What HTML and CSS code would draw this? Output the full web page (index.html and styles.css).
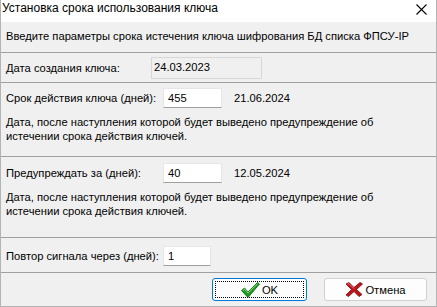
FILE: index.html
```html
<!DOCTYPE html>
<html lang="ru">
<head>
    <meta charset="UTF-8">
    <title>Установка срока использования ключа</title>
    <link rel="stylesheet" href="styles.css">
</head>
<body>
    <div class="window">
        <div class="titlebar">
            <span class="title">Установка срока использования ключа</span>
            <svg class="close" width="11" height="11" viewBox="0 0 11 11">
                <path d="M0.5 0.5 L10.5 10.5 M10.5 0.5 L0.5 10.5" stroke="#000" stroke-width="1.1"/>
            </svg>
        </div>
        <div class="panel intro">Введите параметры срока истечения ключа шифрования БД списка ФПСУ-IP</div>
        <div class="panel created">
            <span class="label">Дата создания ключа:</span>
            <span class="field disabled">24.03.2023</span>
        </div>
        <div class="panel term">
            <div class="row">
                <span class="label">Срок действия ключа (дней):</span>
                <span class="field edit">455</span>
                <span class="date">21.06.2024</span>
            </div>
            <p class="note">Дата, после наступления которой будет выведено предупреждение об<br>истечении срока действия ключей.</p>
        </div>
        <div class="panel warn">
            <div class="row">
                <span class="label">Предупреждать за (дней):</span>
                <span class="field edit">40</span>
                <span class="date">12.05.2024</span>
            </div>
            <p class="note">Дата, после наступления которой будет выведено предупреждение об<br>истечении срока действия ключей.</p>
        </div>
        <div class="panel repeat">
            <div class="row">
                <span class="label">Повтор сигнала через (дней):</span>
                <span class="field edit short">1</span>
            </div>
        </div>
        <div class="panel buttons">
            <button class="btn ok">
                <span class="focus">
                    <svg width="19" height="16" viewBox="0 0 19 16">
                        <path d="M0.5 8.5 L3.5 6 L7 10 L16.5 0.5 L18.5 2 L7 15.5 Z" fill="#1d9a1d" stroke="#0b5e0b" stroke-width="0.8"/>
                        <path d="M2 8.3 L3.6 7.2 L7 11 L16.5 1.8" fill="none" stroke="#7fe07f" stroke-width="1"/>
                    </svg>
                    OK
                </span>
            </button>
            <button class="btn cancel">
                <svg width="18" height="15" viewBox="0 0 18 15">
                    <path d="M1 2 L4 0.5 L9 5.5 L15 0.5 L17.5 2 L11.5 7.5 L17 12.5 L14 14.5 L9 9.5 L3.5 14.5 L1 13 L6.5 7.5 Z" fill="#c0141a" stroke="#6e0a0d" stroke-width="0.8"/>
                    <path d="M2.5 2.2 L4 1.6 L9 6.6" fill="none" stroke="#ee7a7a" stroke-width="0.9"/>
                </svg>
                Отмена
            </button>
        </div>
    </div>
</body>
</html>
```

FILE: styles.css
```css
body {
    margin: 0;
    font-family: "Liberation Sans", Arial, sans-serif;
    font-size: 11.2px;
    color: #000;
    background: #f0f0f0;
}
.window {
    width: 437px;
    height: 307px;
    box-sizing: border-box;
    border-left: 1px solid #b4b4b4;
    border-right: 1px solid #b4b4b4;
    border-bottom: 1px solid #b4b4b4;
    background: #f0f0f0;
}
.titlebar {
    height: 22px;
    background: #fff;
    display: flex;
    justify-content: space-between;
    align-items: flex-start;
    padding: 2px 9px 0 1px;
    box-sizing: border-box;
}
.title {
    font-size: 12px;
    line-height: 13px;
}
.close {
    margin-top: 2px;
}
.panel {
    border-bottom: 1px solid #a0a0a0;
    box-sizing: border-box;
    padding-left: 5px;
}
.intro {
    height: 31px;
    padding-top: 8px;
}
.created {
    height: 30px;
    display: flex;
    align-items: center;
}
.term {
    height: 74px;
    padding-top: 5px;
}
.warn {
    height: 81px;
    padding-top: 6px;
}
.repeat {
    height: 35px;
    padding-top: 8px;
}
.buttons {
    height: 33px;
    border-bottom: none;
    display: flex;
    align-items: center;
    justify-content: flex-end;
    gap: 17px;
    padding-right: 9px;
}
.row {
    display: flex;
    align-items: center;
    white-space: nowrap;
}
.label {
    width: 157px;
    flex: none;
}
.created .label {
    width: 145px;
}
.field {
    box-sizing: border-box;
    display: flex;
    align-items: center;
    flex: none;
}
.disabled {
    width: 111px;
    height: 22px;
    padding-left: 2px;
    padding-bottom: 2px;
    background: #f0f0f0;
    border: 1px solid #d7d7d7;
}
.edit {
    width: 59px;
    height: 20px;
    padding-left: 4px;
    background: #fff;
    border: 1px solid #e6e6e6;
    border-bottom-color: #a0a0a0;
}
.short {
    width: 48px;
}
.date {
    margin-left: 12px;
}
.note {
    margin: 7px 0 0;
    line-height: 14px;
    white-space: nowrap;
}
.btn {
    font: inherit;
    height: 23px;
    background: #fdfdfd;
    border: 1px solid #d0d0d0;
    border-radius: 3px;
    display: flex;
    align-items: center;
    justify-content: center;
    gap: 2px;
    padding: 0;
}
.ok {
    width: 95px;
    border-color: #0078d7;
    padding: 2px;
}
.focus {
    flex: 1;
    height: 100%;
    box-sizing: border-box;
    border: 1px dotted #000;
    display: flex;
    align-items: center;
    justify-content: center;
    gap: 2px;
}
.cancel {
    width: 103px;
}
```
